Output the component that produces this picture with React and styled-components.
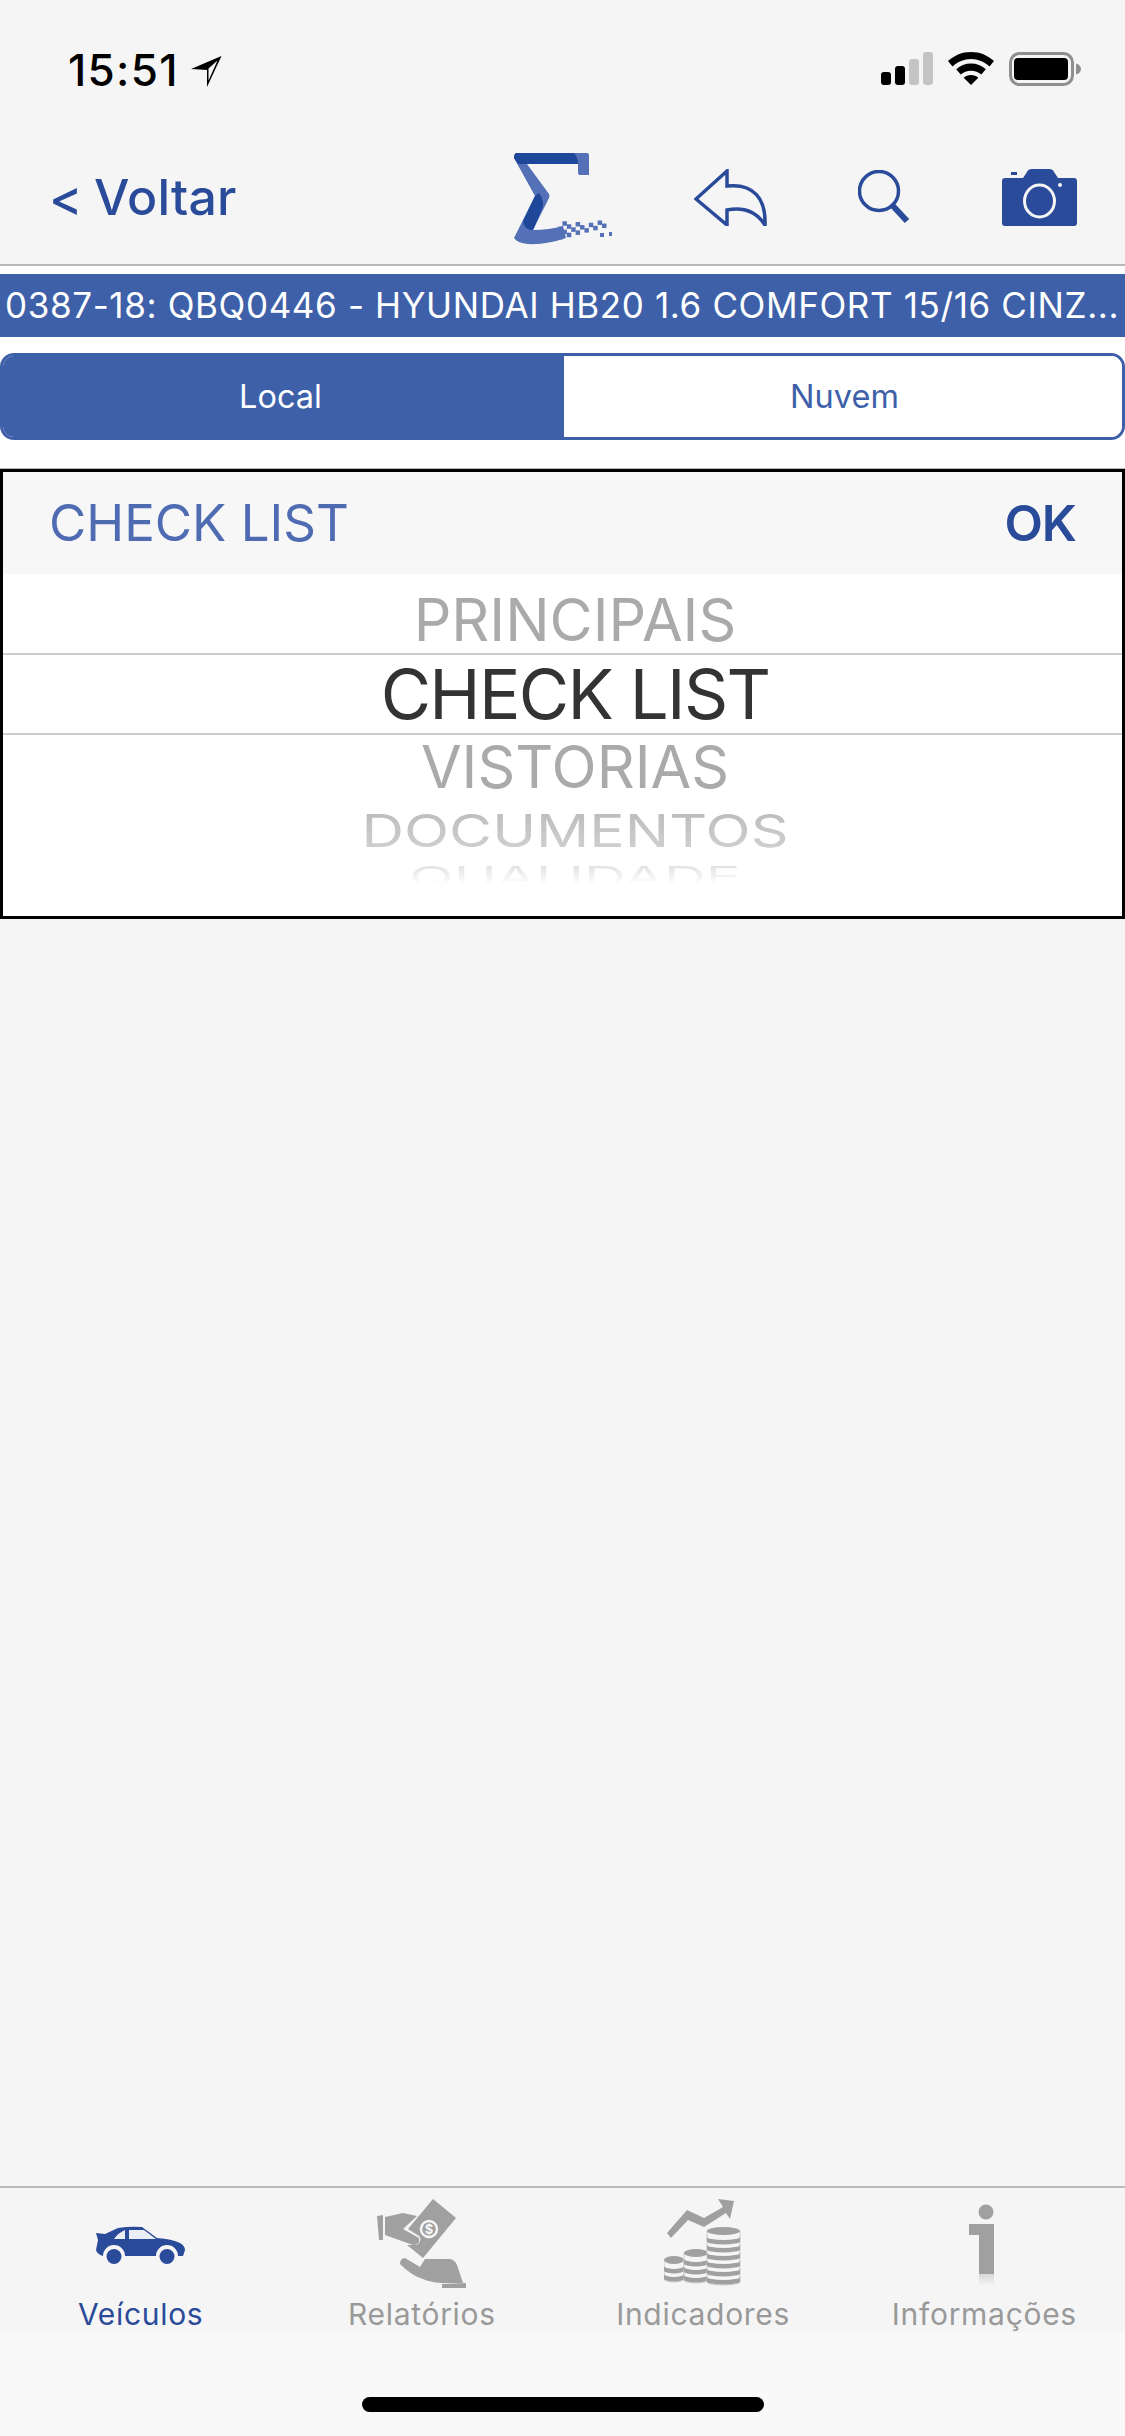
import React from 'react';
import styled, { createGlobalStyle } from 'styled-components';

const Global = createGlobalStyle`
  html, body { margin: 0; padding: 0; background: #f5f5f5; }
  * { box-sizing: border-box; }
`;
const BLUE = '#2a4a9a';
const MID = '#3e60a9';
const GREY = '#a0a0a0';
const Page = styled.div`
  width: 1125px; height: 2436px; display: flex; flex-direction: column;
  font-family: Inter, "Liberation Sans", sans-serif; background: #f5f5f5; overflow: hidden;
`;
const StatusBar = styled.div`
  height: 138px; flex: none; display: flex; align-items: flex-start; justify-content: space-between;
  padding: 52px 43px 0 68px;
`;
const Clock = styled.div`
  display: flex; align-items: flex-start; gap: 12px; font-size: 44px; line-height: 36px; font-weight: 500; color: #000; letter-spacing: 1.300px;
`;
const ClockArrow = styled.svg`display: block; margin-top: 4px;`;
const StatusIcons = styled.div`display: flex; align-items: flex-start; gap: 15px;`;
const Toolbar = styled.div`
  height: 128px; flex: none; display: flex; align-items: flex-start; border-bottom: 2px solid #b9b9b9;
  padding: 15px 48px 0 49px;
`;
const Back = styled.div`
  font-size: 50px; font-weight: 550; line-height: 60px; color: ${BLUE}; margin-top: 14px; width: 465px; word-spacing: -2px; letter-spacing: 0.2px;
`;
const ToolIcon = styled.svg`flex: none; margin-left: ${p => p.$ml}px; margin-top: ${p => p.$mt}px; display: block;`;
const Sheet = styled.div`
  flex: none; background: #fff; padding: 8px 0 28px; border-bottom: 1px solid #b9b9b9;
`;
const Banner = styled.div`
  height: 63px; background: ${MID}; color: #fff; font-size: 35px; line-height: 63px;
  padding-left: 5px; white-space: nowrap; overflow: hidden; letter-spacing: 0.62px;
`;
const Segment = styled.div`
  height: 87px; margin-top: 16px; display: flex; border: 3px solid ${MID}; border-radius: 14px; overflow: hidden; background: #fff;
`;
const SegmentTab = styled.div`
  display: flex; align-items: center; justify-content: center; font-size: 32.500px;
  width: ${p => p.$active ? 561 : 558}px; padding-right: ${p => p.$active ? 6 : 0}px; padding-left: ${p => p.$active ? 0 : 3}px;
  background: ${p => p.$active ? MID : '#fff'}; color: ${p => p.$active ? '#fff' : MID};
`;
const Picker = styled.div`
  height: 450px; flex: none; border: 3px solid #000; background: #fff; display: flex; flex-direction: column;
`;
const PickerHead = styled.div`
  height: 102px; flex: none; background: #f7f7f7; display: flex; align-items: center; justify-content: space-between; padding: 0 46px 0 46px;
`;
const PickerTitle = styled.div`font-size: 51px; color: #4f6cb3; font-weight: 400; margin-top: -2px;`;
const PickerOk = styled.div`font-size: 50px; color: ${BLUE}; font-weight: 600; letter-spacing: -1px;`;
const Wheel = styled.div`flex: 1; overflow: hidden;`;
const Row = styled.div`
  height: ${p => p.$h}px; display: flex; align-items: center; justify-content: center; white-space: nowrap; padding-left: 25px;
  border-top: ${p => p.$line ? '2px solid #cdcdcd' : 'none'};
  border-bottom: ${p => p.$line ? '2px solid #cdcdcd' : 'none'};
`;
const RowText = styled.span`
  display: block; font-size: ${p => p.$size}px; line-height: 1; color: ${p => p.$color};
  letter-spacing: ${p => p.$ls || 0}px;
  transform: translateY(${p => p.$dy || 0}px) scale(${p => p.$sx || 1}, ${p => p.$sy || 1});
  ${p => p.$fade ? `-webkit-mask-image: linear-gradient(${p.$fade}); mask-image: linear-gradient(${p.$fade});` : ''}
`;
const Spacer = styled.div`flex: 1;`;
const TabBar = styled.div`
  height: 147px; flex: none; border-top: 2px solid #b9b9b9; background: #f5f5f5; display: grid; grid-template-columns: repeat(4, 1fr);
`;
const Tab = styled.div`display: flex; flex-direction: column; align-items: center;`;
const TabIcon = styled.div`height: 111px; display: flex; align-items: flex-start; justify-content: center; width: 100%;`;
const TabSvg = styled.svg`display: block; margin-top: ${p => p.$mt}px; margin-right: ${p => p.$mr || 0}px;`;
const TabLabel = styled.div`font-size: 30px; line-height: 30px; letter-spacing: 0.7px; color: ${p => p.$active ? BLUE : '#999'};`;
const HomeArea = styled.div`height: 103px; flex: none; background: #f9f9f9; display: flex; justify-content: center; padding-top: 64px;`;
const HomeBar = styled.div`width: 402px; height: 15px; border-radius: 8px; background: #000;`;

const Signal = () => (
  <svg width="52" height="33" viewBox="0 0 52 33">
    <rect x="0" y="20" width="10" height="13" rx="3" fill="#000" />
    <rect x="14" y="14" width="10" height="19" rx="3" fill="#000" />
    <rect x="28" y="7" width="10" height="26" rx="3" fill="#c4c4c4" />
    <rect x="42" y="0" width="10" height="33" rx="3" fill="#c4c4c4" />
  </svg>
);
const Wifi = () => (
  <svg width="46" height="33" viewBox="0 0 46 33">
    <path d="M23 0C14 0 6.500 3.300 0 9l4.500 5.500C9.800 9.800 16 7 23 7s13.200 2.800 18.500 7.500L46 9C39.500 3.300 32 0 23 0z" fill="#000" />
    <path d="M23 11.500c-5.700 0-10.600 2-14.800 5.700l4.500 5.400c2.800-2.500 6.300-3.900 10.300-3.900s7.500 1.400 10.300 3.900l4.500-5.400c-4.200-3.700-9.100-5.700-14.800-5.700z" fill="#000" />
    <path d="M23 23c-3 0-5.300 1-7.300 2.800L23 33l7.300-7.200C28.300 24 26 23 23 23z" fill="#000" />
  </svg>
);
const Battery = () => (
  <svg width="73" height="34" viewBox="0 0 73 34">
    <rect x="1.500" y="1.500" width="62" height="31" rx="9" fill="none" stroke="#8f8f8f" strokeWidth="3" />
    <rect x="5" y="6" width="54" height="22" rx="4" fill="#000" />
    <path d="M67 11.500c3 .8 5 3 5 5.500s-2 4.700-5 5.500z" fill="#8f8f8f" />
  </svg>
);
const Arrow = () => (
  <ClockArrow width="32" height="32" viewBox="0 0 32 32">
    <path d="M30.500 0 L0 13 L16 14 L16 31 Z" fill="#000" />
    <path d="M26.500 4.500 L17.500 12.500 L17.500 24.500 Z" fill="#f5f5f5" />
  </ClockArrow>
);
const CHECKER = [];
for (let c = 0; c < 11; c++) {
  for (let r = 0; r < 4; r++) {
    if ((c + r) % 2 === 0) {
      const x = 44 + c * 4.400;
      const y = 82 - c * 1.150 - r * 4.200;
      if (y > 67) CHECKER.push([x, y]);
    }
  }
}
const Logo = () => (
  <ToolIcon $ml={0} $mt={0} width="98" height="92" viewBox="0 0 98 92">
    <path d="M2 0 H73 Q75 0 75 2 V22 H66 Q64 22 64 20 V11 H13 L35 41 Q36 43 35 45 L19 77 Q35 77 49 73 L52 85 Q32 92 14 91 Q3 90 0 85 L21 43 L0 5 Q0 1 2 0 Z" fill="#5471b7" />
    <path d="M2 0 H60 Q64 4 64 11 H4 L0 5 Q0 1 2 0 Z" fill="#1f4799" />
    <path d="M21 43 L25 40 Q31 48 28 56 L19 77 Q10 77 9 68 Z" fill="#1f4799" />
    <g fill="#5471b7">
      {CHECKER.map(([x, y], i) => (<rect key={i} x={x} y={y} width="4.500" height="4.500" />))}
      <rect x="86" y="80" width="4" height="4" />
      <rect x="95" y="79" width="3" height="4" />
    </g>
  </ToolIcon>
);
const CarIcon = () => (
  <TabSvg $mt={38} width="90" height="38" viewBox="0 0 90 38">
    <path d="M0 7 L9 8 L22 2 Q34 0 46 1 L61 12 Q76 13 84 17 Q89 20 89 24 L87 30 H82 A11 11 0 0 0 60 30 H29 A11 11 0 0 0 7 30 Q1 28 0 24 L2 14 Z" fill="#2a4a9a" />
    <path d="M18 13 Q22 7 29 4 V13 Z M33 4 H48 L60 13 H33 Z" fill="#e9edf5" />
    <circle cx="18" cy="30.500" r="7.500" fill="#2a4a9a" />
    <circle cx="71" cy="30.500" r="7.500" fill="#2a4a9a" />
  </TabSvg>
);
const HandIcon = () => (
  <TabSvg $mt={10} width="90" height="91" viewBox="0 0 90 91">
    <path d="M56 1 L79 20 L46 60 L30 47 L40 47 Q46 42 42 38 L31 31 L41 19 Z" fill={GREY} />
    <circle cx="52" cy="31" r="8" fill="none" stroke="#f5f5f5" strokeWidth="2.500" />
    <text x="52" y="36" fontSize="13" fontWeight="700" textAnchor="middle" fill="#f5f5f5" fontFamily="Inter">$</text>
    <path d="M0 18 L6 17 V42 L2 42 Z M8 19 L26 15 L40 18 L26 31 L42 40 Q43 46 38 47 Q35 47 33 46 L8 37 Z" fill={GREY} />
    <path d="M23 66 Q23 60 28 60 L43 69 L48 61 H73 Q78 62 80 67 L86 85 L65 85 Q52 84 46 81 Q35 78 23 66 Z" fill={GREY} />
    <path d="M65 86 L89 85 V90 H65 Z" fill={GREY} />
  </TabSvg>
);
const CoinStack = ({ x, y, w, n }) => {
  const rx = w / 2;
  const bands = Array.from({ length: n }, (_, i) => y + 6 + i * 8);
  const end = y + 6 + n * 8 - 3;
  return (
    <g>
      <path d={`M${x} ${y} V${end} A${rx} 3 0 0 0 ${x + w} ${end} V${y} Z`} fill="#f5f5f5" stroke="#c9c9c9" strokeWidth="1" />
      {bands.map((b) => (
        <path key={b} d={`M${x} ${b} v4.500 A${rx} 3 0 0 0 ${x + w} ${b + 4.500} v-4.500 A${rx} 3 0 0 1 ${x} ${b} Z`} fill={GREY} />
      ))}
      <ellipse cx={x + rx} cy={y} rx={rx} ry="4" fill={GREY} />
    </g>
  );
};
const ChartIcon = () => (
  <TabSvg $mt={10} width="78" height="92" viewBox="0 0 78 92">
    <path d="M3 35 L23 12 L40 20 L59 9 L54 1 L70 3 L66 21 L62 15 L40 29 L24 22 L7 40 Z" fill={GREY} />
    <CoinStack x={0} y={62} w={20} n={2} />
    <CoinStack x={20} y={55} w={24} n={3} />
    <CoinStack x={43} y={33} w={33} n={6} />
  </TabSvg>
);
const InfoIcon = () => (
  <TabSvg $mt={16} $mr={4} width="26" height="82" viewBox="0 0 26 82">
    <defs>
      <linearGradient id="ifade" x1="0" x2="0" y1="0" y2="1">
        <stop offset="0" stopColor="#a0a0a0" stopOpacity=".35" />
        <stop offset="1" stopColor="#a0a0a0" stopOpacity="0" />
      </linearGradient>
    </defs>
    <circle cx="17" cy="8" r="7.500" fill={GREY} />
    <rect x="0" y="20" width="25" height="11" fill={GREY} />
    <rect x="10" y="20" width="15" height="50" fill={GREY} />
    <rect x="10" y="70" width="15" height="12" fill="url(#ifade)" />
  </TabSvg>
);

export default function App() {
  return (
    <Page>
      <Global />
      <StatusBar>
        <Clock>15:51<Arrow /></Clock>
        <StatusIcons><Signal /><Wifi /><Battery /></StatusIcons>
      </StatusBar>
      <Toolbar>
        <Back>&lt; Voltar</Back>
        <Logo />
        <ToolIcon $ml={82} $mt={16} width="73" height="57" viewBox="0 0 73 57">
          <path d="M33 2 L2 30 L33 56 V41 C48 38 62 42 71 56 C72 30 60 14 33 17 Z" fill="none" stroke={BLUE} strokeWidth="3.500" strokeLinejoin="miter" />
        </ToolIcon>
        <ToolIcon $ml={91} $mt={17} width="53" height="53" viewBox="0 0 53 53">
          <ellipse cx="21" cy="21" rx="19.500" ry="19.500" fill="none" stroke={BLUE} strokeWidth="3.500" />
          <path d="M35 36 L49 51" stroke={BLUE} strokeWidth="6" />
        </ToolIcon>
        <ToolIcon $ml={91} $mt={16} width="75" height="57" viewBox="0 0 75 57">
          <path d="M3 9 H21 L25 3 Q26 0 30 0 H47 Q51 0 52 3 L56 9 H72 Q75 9 75 12 V54 Q75 57 72 57 H3 Q0 57 0 54 V12 Q0 9 3 9 Z" fill={BLUE} />
          <rect x="9" y="3" width="6" height="3" fill={BLUE} />
          <ellipse cx="37.500" cy="32" rx="15" ry="16" fill="none" stroke="#f5f5f5" strokeWidth="3" />
          <circle cx="58" cy="16" r="2" fill="#f5f5f5" />
        </ToolIcon>
      </Toolbar>
      <Sheet>
        <Banner>0387-18: QBQ0446 - HYUNDAI HB20 1.6 COMFORT 15/16 CINZ...</Banner>
        <Segment>
          <SegmentTab $active>Local</SegmentTab>
          <SegmentTab>Nuvem</SegmentTab>
        </Segment>
      </Sheet>
      <Picker>
        <PickerHead>
          <PickerTitle>CHECK LIST</PickerTitle>
          <PickerOk>OK</PickerOk>
        </PickerHead>
        <Wheel>
          <Row $h={79}><RowText $size={59} $color="#aaa" $dy={6}>PRINCIPAIS</RowText></Row>
          <Row $h={82} $line><RowText $size={69} $color="#333" $ls={-1.700}>CHECK LIST</RowText></Row>
          <Row $h={74}><RowText $size={59} $color="#aaa" $dy={-6}>VISTORIAS</RowText></Row>
          <Row $h={62}><RowText $size={58} $color="#aaa" $sx={1.017} $sy={0.78} $dy={-9} $fade="#000c, #0008">DOCUMENTOS</RowText></Row>
          <Row $h={30}><RowText $size={58} $color="#aaa" $sx={1} $sy={0.48} $dy={-9} $fade="#0006, #0000 75%">QUALIDADE</RowText></Row>
        </Wheel>
      </Picker>
      <Spacer />
      <TabBar>
        <Tab><TabIcon><CarIcon /></TabIcon><TabLabel $active>Veículos</TabLabel></Tab>
        <Tab><TabIcon><HandIcon /></TabIcon><TabLabel>Relatórios</TabLabel></Tab>
        <Tab><TabIcon><ChartIcon /></TabIcon><TabLabel>Indicadores</TabLabel></Tab>
        <Tab><TabIcon><InfoIcon /></TabIcon><TabLabel>Informações</TabLabel></Tab>
      </TabBar>
      <HomeArea><HomeBar /></HomeArea>
    </Page>
  );
}
